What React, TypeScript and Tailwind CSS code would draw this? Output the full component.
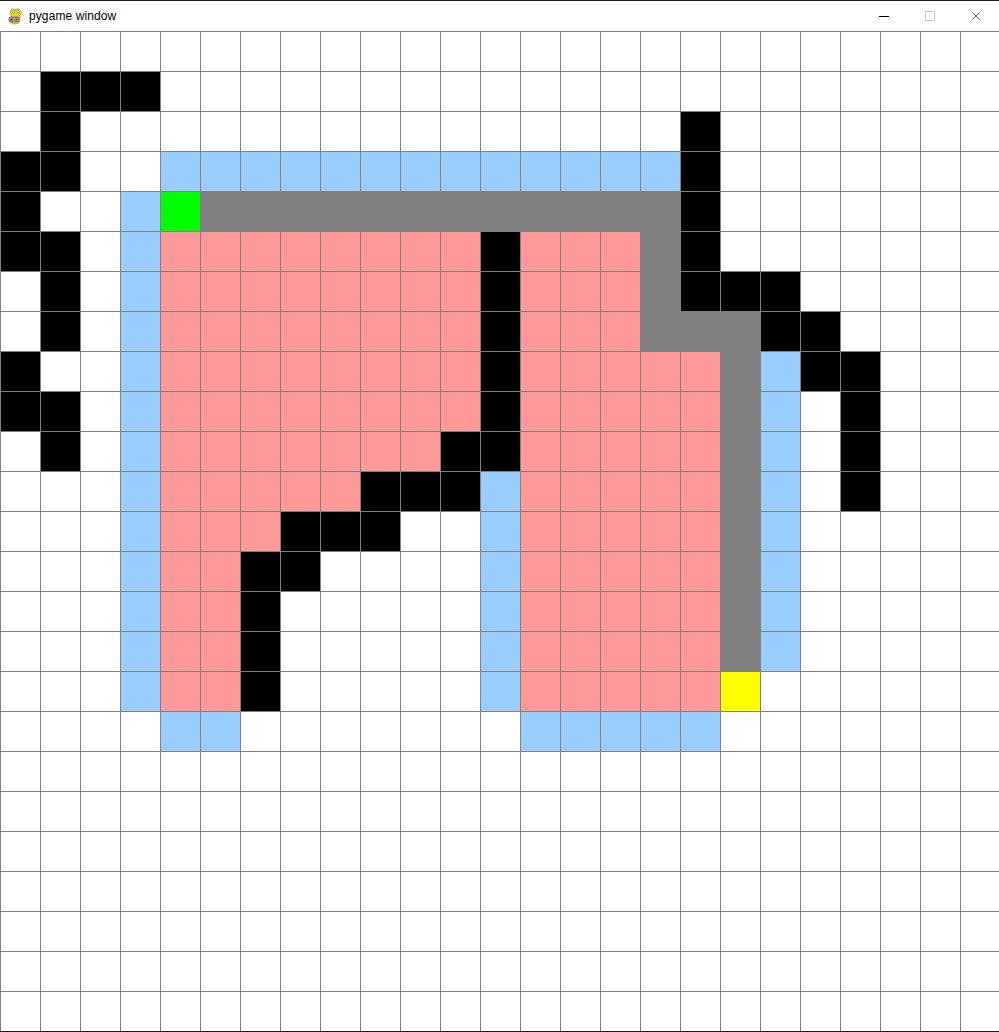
import React from "react";
import { X } from "lucide-react";

// . empty, K wall, B open set, P closed set, G path, S start, E end
const rows: string[] = [
  ".........................",
  ".KKK.....................",
  ".K...............K.......",
  "KK..BBBBBBBBBBBBBK.......",
  "K..BSGGGGGGGGGGGGK.......",
  "KK.BPPPPPPPPKPPPGK.......",
  ".K.BPPPPPPPPKPPPGKKK.....",
  ".K.BPPPPPPPPKPPPGGGKK....",
  "K..BPPPPPPPPKPPPPPGBKK...",
  "KK.BPPPPPPPPKPPPPPGB.K...",
  ".K.BPPPPPPPKKPPPPPGB.K...",
  "...BPPPPPKKKBPPPPPGB.K...",
  "...BPPPKKK..BPPPPPGB.....",
  "...BPPKK....BPPPPPGB.....",
  "...BPPK.....BPPPPPGB.....",
  "...BPPK.....BPPPPPGB.....",
  "...BPPK.....BPPPPPE......",
  "....BB.......BBBBB.......",
  ".........................",
  ".........................",
  ".........................",
  ".........................",
  ".........................",
  ".........................",
  ".........................",
];

const cellColor: Record<string, string> = {
  ".": "bg-white",
  K: "bg-black",
  B: "bg-[#99ccff]",
  P: "bg-[#ff9999]",
  G: "bg-[#808080]",
  S: "bg-[#00ff00]",
  E: "bg-[#ffff00]",
};

const PygameIcon: React.FC = () => (
  <svg width="16" height="17" viewBox="0 0 16 17" className="shrink-0">
    <path
      d="M3 2 C3 0.5 6 0.5 7 2 C8 0.5 12 0.5 12 2.5 C14 3 14 6 12 7 L12 12 C12 15 9 16 6 16 C3 16 2 14 2 12 L4 9 C2 7 2 3 3 2 Z"
      fill="#f2d21b"
      stroke="#b59a10"
      strokeWidth="0.8"
    />
    <circle cx="5.5" cy="3.5" r="1.3" fill="#fff" stroke="#555" strokeWidth="0.5" />
    <circle cx="10" cy="3.5" r="1.3" fill="#fff" stroke="#555" strokeWidth="0.5" />
    <rect x="1" y="9" width="10" height="5" rx="1" fill="#9a9a9a" stroke="#555" strokeWidth="0.6" />
    <circle cx="3.5" cy="11.5" r="1" fill="#444" />
    <circle cx="8.5" cy="11.5" r="1" fill="#c33" />
  </svg>
);

const App: React.FC = () => {
  return (
    <div className="w-[999px] h-[1032px] overflow-hidden bg-white flex flex-col border-b border-[#1c1c1c]">
      {/* Title bar */}
      <div className="h-[31px] shrink-0 border-t border-[#1c1c1c] flex items-center pl-2 font-['Segoe_UI','Liberation_Sans',sans-serif] text-[12px] text-black">
        <PygameIcon />
        <span className="ml-[5px] -mt-[1px] tracking-[0.1px]">pygame window</span>
        <div className="ml-auto flex items-center h-full">
          <div className="w-[46px] h-full flex items-center justify-center">
            <div className="w-[10px] h-px bg-black" />
          </div>
          <div className="w-[46px] h-full flex items-center justify-center">
            <div className="w-[10px] h-[10px] border border-[#c8c8c8]" />
          </div>
          <div className="w-[46px] h-full flex items-center justify-center">
            <X size={14} strokeWidth={1.1} />
          </div>
        </div>
      </div>

      {/* Grid */}
      <div className="grid grid-cols-[repeat(25,40px)] w-[1000px] shrink-0">
        {rows.map((row, r) =>
          row.split("").map((c, i) => (
            <div
              key={`${r}-${i}`}
              className={`h-10 w-10 border-l border-t border-[#808080] ${cellColor[c]}`}
            />
          ))
        )}
      </div>
    </div>
  );
};

export default App;
